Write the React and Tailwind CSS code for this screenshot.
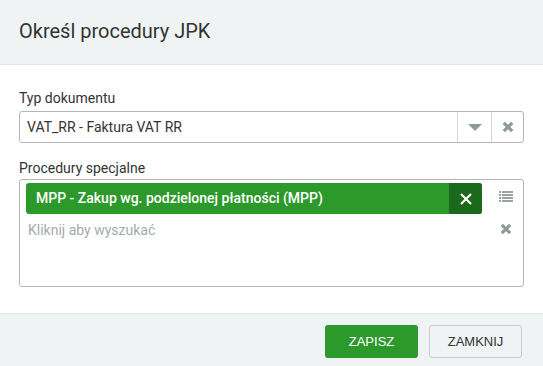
import { useState } from 'react';

const ListIcon = () => (
  <svg width="14" height="12" viewBox="0 0 14 12" className="block">
    {[0, 3, 6, 9].map((y) => (
      <g key={y} fill="#9aa3a6">
        <rect x="0" y={y} width="2" height="2" />
        <rect x="3" y={y} width="11" height="2" />
      </g>
    ))}
  </svg>
);

const ThickX = ({ size = 12, color = '#8c9a9c' }) => (
  <svg width={size} height={size} viewBox="0 0 10 10" className="block">
    <path d="M1.5 1.5 L8.5 8.5 M8.5 1.5 L1.5 8.5" stroke={color} strokeWidth="2.6" strokeLinecap="butt" />
  </svg>
);

export default function App() {
  const [tags, setTags] = useState(['MPP - Zakup wg. podzielonej płatności (MPP)']);

  return (
    <div className="w-[543px] h-[366px] bg-white flex flex-col font-['Roboto',sans-serif] text-[#333]">
      <div className="h-[65px] shrink-0 bg-[#f0f3f4] border-b border-[#e3e6e8] flex items-center px-[19px]">
        <h2 className="text-[20px] leading-none text-[#333] -mt-[2px]">Określ procedury JPK</h2>
      </div>

      <div className="flex-1 px-[19px] pt-[25px]">
        <label className="block text-[14px] leading-4 mb-[5px]">Typ dokumentu</label>
        <div className="h-[32px] border border-[#b5b5b5] rounded-[3px] flex items-stretch">
          <div className="flex-1 flex items-center pl-[7px] text-[14px]">VAT_RR - Faktura VAT RR</div>
          <div className="w-[34px] border-l border-[#d6d6d6] flex items-center justify-center">
            <svg width="14" height="7" viewBox="0 0 14 7"><path d="M0 0 L14 0 L7 7 Z" fill="#8e9a9c" /></svg>
          </div>
          <div className="w-[32px] border-l border-[#d6d6d6] flex items-center justify-center">
            <ThickX />
          </div>
        </div>

        <label className="block text-[14px] leading-4 mt-[17px] mb-[3px]">Procedury specjalne</label>
        <div className="h-[108px] border border-[#b5b5b5] rounded-[3px] flex pl-[6px] pt-[3px] pr-[10px]">
          <div className="flex-1 flex flex-col">
            {tags.map((t) => (
              <div key={t} className="h-[31px] w-[456px] bg-[#2b9a2b] rounded-[3px] flex items-stretch text-white">
                <span className="flex-1 flex items-center pl-[10px] text-[14px] font-medium">{t}</span>
                <button
                  type="button"
                  onClick={() => setTags([])}
                  className="w-[33px] bg-[#1b6a1b] rounded-r-[3px] flex items-center justify-center"
                >
                  <svg width="12" height="12" viewBox="0 0 12 12"><path d="M1 1 L11 11 M11 1 L1 11" stroke="#fff" strokeWidth="2.2" /></svg>
                </button>
              </div>
            ))}
            <div className="text-[14px] text-[#a3abae] pt-[6px] pl-[2px]">Kliknij aby wyszukać</div>
          </div>
          <div className="flex flex-col items-center pt-[8px] gap-[20px] w-[14px]">
            <ListIcon />
            <ThickX />
          </div>
        </div>
      </div>

      <div className="h-[53px] shrink-0 bg-[#f0f3f4] border-t border-[#e3e6e8] flex items-start justify-end gap-[11px] pt-[11px] pr-[21px] font-['Liberation_Sans',Arial,sans-serif]">
        <button type="button" className="w-[93px] h-[33px] rounded-[3px] bg-[#2b9a2b] text-white text-[13px]">ZAPISZ</button>
        <button type="button" className="w-[93px] h-[33px] rounded-[3px] bg-[#f0f3f4] border border-[#c8cccd] text-[#333] text-[13px]">ZAMKNIJ</button>
      </div>
    </div>
  );
}
